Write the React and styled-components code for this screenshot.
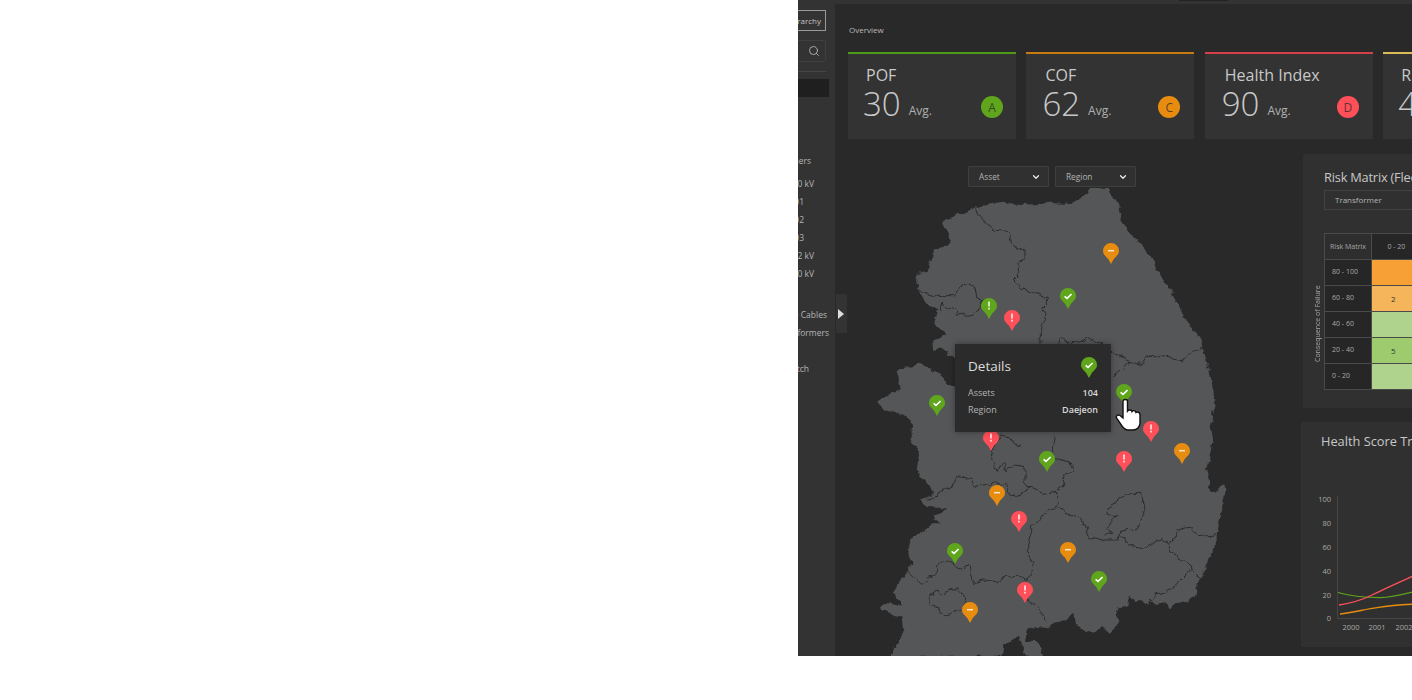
import React from 'react'
import styled, { createGlobalStyle } from 'styled-components'
import { Search, ChevronDown } from 'lucide-react'

const GlobalStyle = createGlobalStyle`
  html, body {
    margin: 0;
    height: 100%;
    overflow: hidden;
    background: #fff;
    font-family: "Open Sans", "Liberation Sans", sans-serif;
  }
`

const Page = styled.div`
  padding-left: 798px;
  width: 614px;
`
const Panel = styled.div`
  display: flex;
  height: 656px;
  width: 614px;
  overflow: hidden;
  background: #292929;
`

/* sidebar is mostly slid off to the left, only the right edge shows */
const Sidebar = styled.aside`
  width: 37px;
  flex-shrink: 0;
  display: flex;
  justify-content: flex-end;
  overflow: hidden;
  background: #333;
`
const SideInner = styled.div`
  width: 200px;
  flex-shrink: 0;
  padding-top: 10px;
  color: #b5b5b5;
  font-size: 8px;
`
const HierarchyBtn = styled.div`
  box-sizing: border-box;
  width: 191px;
  height: 21px;
  border: 1px solid #9a9a9a;
  display: flex;
  align-items: center;
  justify-content: flex-end;
  padding-right: 4px;
  font-size: 8px;
  color: #c4c4c4;
`
const SearchBox = styled.div`
  box-sizing: border-box;
  width: 191px;
  height: 22px;
  margin-top: 9px;
  border: 1px solid #3f3f3f;
  border-radius: 2px;
  display: flex;
  align-items: center;
  justify-content: flex-end;
  padding-right: 5px;
  color: #c8c8c8;
`
const Divider = styled.div`
  width: 191px;
  height: 1px;
  margin-top: 9px;
  background: #454545;
`
const ActiveBar = styled.div`
  width: 194px;
  height: 18px;
  margin-top: 7px;
  background: #1f1f1f;
`
const TreeRow = styled.div`
  height: 18px;
  line-height: 18px;
  text-align: right;
  white-space: nowrap;
  font-size: 8.5px;
  padding-right: ${p => p.$right}px;
  margin-top: ${p => p.$top || 0}px;
`

const Main = styled.main`
  position: relative;
  flex: 1;
  min-width: 0;
  overflow: hidden;
`
const TopStrip = styled.div`
  height: 4px;
  background: #333;
`
const StripTab = styled.div`
  width: 49px;
  height: 1px;
  margin-left: 344px;
  background: #222;
`
const Collapse = styled.div`
  position: absolute;
  left: 1px;
  top: 294px;
  width: 11px;
  height: 39px;
  background: #333;
  display: flex;
  align-items: center;
  padding-left: 2px;
  box-sizing: border-box;
  &::after {
    content: '';
    border-left: 6px solid #ddd;
    border-top: 5px solid transparent;
    border-bottom: 5px solid transparent;
  }
`
const Heading = styled.div`
  margin: 19px 0 0 14px;
  height: 14px;
  line-height: 14px;
  font-size: 8px;
  color: #b9b9b9;
`
const Cards = styled.div`
  display: flex;
  gap: 10.4px;
  margin: 15px 0 0 13px;
`
const Card = styled.div`
  position: relative;
  box-sizing: border-box;
  width: 168px;
  height: 87px;
  flex-shrink: 0;
  padding: 11px 0 0 ${p => p.$inset}px;
  background: #333;
  border-top: 2px solid ${p => p.$color};
`
const CardTitle = styled.div`
  font-size: 16px;
  line-height: 20px;
  color: #c8c8c8;
  padding-left: 3px;
`
const CardValue = styled.div`
  display: flex;
  align-items: baseline;
  gap: 8px;
  margin-top: -1px;
  color: #c8c8c8;
`
const Num = styled.span`
  font-size: 33px;
  line-height: 40px;
  font-weight: 300;
`
const Avg = styled.span`
  position: relative;
  top: -1px;
  font-size: 12px;
  color: #b0b0b0;
`
const Badge = styled.div`
  position: absolute;
  right: ${p => p.$right}px;
  bottom: 21px;
  width: 22px;
  height: 22px;
  border-radius: 50%;
  background: ${p => p.$color};
  color: rgba(40, 40, 40, 0.75);
  font-size: 12px;
  display: flex;
  align-items: center;
  justify-content: center;
`

const Content = styled.div`
  display: flex;
  margin: 15px 0 0 13px;
`
const MapColumn = styled.div`
  width: 453px;
  flex-shrink: 0;
`
const Filters = styled.div`
  display: flex;
  gap: 6px;
  margin: 12px 0 1px 120px;
`
const Filter = styled.div`
  box-sizing: border-box;
  width: 81px;
  height: 21px;
  padding: 0 7px 0 10px;
  display: flex;
  align-items: center;
  justify-content: space-between;
  background: #303030;
  border: 1px solid #3f3f3f;
  border-radius: 1px;
  font-size: 8.3px;
  color: #b4b4b4;
  svg { color: #eee; }
`
const MapCanvas = styled.div`
  position: relative;
  width: 453px;
  height: 468px;
  svg.land { display: block; }
`
const PinSpot = styled.div`
  position: absolute;
  left: ${p => p.$x - 848 - 8}px;
  top: ${p => p.$y - 188 - 8}px;
  width: 16px;
  height: 21px;
`
const HandSpot = styled.div`
  position: absolute;
  left: 267px;
  top: 210px;
  width: 26px;
  height: 33px;
`
const Tooltip = styled.div`
  position: absolute;
  left: 107px;
  top: 156px;
  box-sizing: border-box;
  width: 156px;
  height: 88px;
  padding: 12px 13px;
  background: #2b2b2b;
  box-shadow: 0 0 6px rgba(0, 0, 0, 0.35);
`
const TipHead = styled.div`
  height: 20px;
  line-height: 20px;
  font-size: 13.5px;
  color: #dcdcdc;
  margin-bottom: 8px;
`
const TipRow = styled.div`
  display: flex;
  justify-content: space-between;
  height: 17px;
  line-height: 17px;
  font-size: 9px;
  color: #b4b4b4;
  b { font-weight: 600; color: #d8d8d8; }
`
const TipPin = styled.div`
  position: absolute;
  right: 14px;
  top: 13px;
  width: 16px;
  height: 21px;
`

const RightColumn = styled.div`
  flex-shrink: 0;
  display: flex;
  flex-direction: column;
  gap: 14px;
`
const Box = styled.section`
  width: 400px;
  height: ${p => p.$h}px;
  margin-left: ${p => p.$left}px;
  background: #303030;
  box-sizing: border-box;
  padding-top: ${p => p.$top}px;
`
const BoxTitle = styled.div`
  height: 18px;
  line-height: 18px;
  font-size: 12.8px;
  letter-spacing: ${p => p.$track || 0}px;
  color: #c8c8c8;
  white-space: nowrap;
  margin-left: ${p => p.$left}px;
`
const TypeSelect = styled.div`
  box-sizing: border-box;
  width: 200px;
  height: 20px;
  line-height: 18px;
  margin: 4px 0 23px 21px;
  padding-left: 10px;
  border: 1px solid #414141;
  font-size: 8px;
  color: #b4b4b4;
`
const MatrixWrap = styled.div`
  display: flex;
  padding-left: 9px;
`
const AxisLabel = styled.div`
  width: 12px;
  height: 129px;
  margin-top: 26px;
  writing-mode: vertical-rl;
  transform: rotate(180deg);
  text-align: center;
  font-size: 7px;
  line-height: 12px;
  color: #a8a8a8;
  white-space: nowrap;
`
const Matrix = styled.table`
  border-collapse: collapse;
  table-layout: fixed;
  width: 297px;
  font-size: 7px;
  color: #a8a8a8;
  td, th {
    box-sizing: border-box;
    height: 26px;
    padding: 0;
    font-weight: 400;
    border: 1px solid #4a4a4a;
    text-align: center;
  }
  th { background: #262626; }
`
const Corner = styled.th`
  width: 47px;
  && { background: #2e2e2e; }
`
const RangeCell = styled.td`
  background: #262626;
  && {
    text-align: left;
    padding: 0 0 3px 7px;
  }
`
const HeatCell = styled.td`
  background: ${p => p.$bg};
  color: #333;
  && { padding-right: ${p => p.$pad || 0}px; }
  font-size: 8px;
`

const pinColors = { green: '#5fa61c', orange: '#e88c10', red: '#ff4f58' }

const Pin = ({ color, mark }) => (
  <svg width="16" height="21" viewBox="0 0 16 21">
    <path
      d="M8 0A8 8 0 0 1 16 8C16 12 12 14 10.5 16.5L8 21L5.5 16.5C4 14 0 12 0 8A8 8 0 0 1 8 0Z"
      fill={pinColors[color]}
    />
    {mark === 'check' && <path d="M4.6 8.4L7 10.4L11.6 6" fill="none" stroke="#fff" strokeWidth="1.6" />}
    {mark === 'alert' && <path d="M8 3.4V8.4M8 9.8V11.4" fill="none" stroke="#fff" strokeWidth="1.4" />}
    {mark === 'minus' && <path d="M5 7.7H11" fill="none" stroke="#f6e6cc" strokeWidth="1.5" />}
  </svg>
)

const pins = [
  { x: 1111, y: 251, color: 'orange', mark: 'minus' },
  { x: 989, y: 306, color: 'green', mark: 'alert' },
  { x: 1012, y: 318, color: 'red', mark: 'alert' },
  { x: 1068, y: 296, color: 'green', mark: 'check' },
  { x: 937, y: 403, color: 'green', mark: 'check' },
  { x: 991, y: 438, color: 'red', mark: 'alert' },
  { x: 1151, y: 429, color: 'red', mark: 'alert' },
  { x: 1182, y: 451, color: 'orange', mark: 'minus' },
  { x: 1124, y: 459, color: 'red', mark: 'alert' },
  { x: 1047, y: 459, color: 'green', mark: 'check' },
  { x: 997, y: 493, color: 'orange', mark: 'minus' },
  { x: 1019, y: 519, color: 'red', mark: 'alert' },
  { x: 955, y: 551, color: 'green', mark: 'check' },
  { x: 1068, y: 550, color: 'orange', mark: 'minus' },
  { x: 1099, y: 579, color: 'green', mark: 'check' },
  { x: 1025, y: 590, color: 'red', mark: 'alert' },
  { x: 970, y: 610, color: 'orange', mark: 'minus' },
  { x: 1124, y: 392, color: 'green', mark: 'check' },
]

const LAND = `M660 25L680 18L715 22L722 45L735 60L745 80L755 115L770 150L790 172L815 195L832 222L850 250L870 280L890 310L905 335
L920 362L935 395L950 425L975 455L990 472L998 505L1008 540L1018 570L1030 630L1033 675L1028 720L1022 745L1030 780L1018 830L1005 870
L1018 905L1010 925L1035 938L1065 910L1073 930L1060 960L1052 1010L1040 1065L1040 1105L1012 1128L1006 1150L1000 1180L985 1200L975 1250
L950 1262L935 1265L915 1275L900 1290L880 1270L860 1275L840 1262L835 1278L810 1262L795 1268L780 1245L775 1280L745 1285L735 1292L745 1320
L725 1360L695 1345L660 1360L640 1345L615 1335L610 1295L590 1320L560 1330L530 1345L500 1340L470 1350L465 1382L505 1388L520 1430
L470 1430L450 1370L438 1380L400 1395L395 1430L60 1430L80 1400L100 1360L95 1310L60 1300L30 1290L55 1270L100 1280L70 1240L110 1180
L125 1150L115 1120L125 1080L190 1030L215 1030L190 1010L235 982L170 985L150 960L195 935L165 900L140 870L150 810L125 780L125 720
L90 705L45 690L20 665L50 650L92 625L80 572L125 562L150 548L215 585L232 618L300 620L300 540L255 530L215 505L190 510L185 478L232 465
L190 430L205 390L165 368L145 330L140 285L170 275L185 232L192 212L215 205L245 185L235 160L210 130L240 110L290 95L320 80L400 68L450 72
L520 68L600 72L640 50Z`

const BORDERS = [
  'M320 85L330 110L350 130L370 150L415 155L425 190L465 210L465 240L445 250L445 290L435 300L455 325L490 340L535 350L535 365L515 385L525 400L515 450L512 490',
  'M145 330L165 340L210 350L255 350L265 325L290 310L315 320L320 350L340 360L330 385L310 400L265 405L250 385L230 380L215 365L210 390',
  'M565 490L575 475L600 490L620 490L650 475L690 490L725 520L780 545L815 550L830 530L880 530L940 540L965 515L995 505',
  'M725 590L750 570L780 545',
  'M555 770L550 810L555 835L600 845L605 870L585 885L580 915L555 935L520 940L480 925L465 905L465 860L435 855L410 875L400 845L385 875L362 840L370 800L390 765L420 770L440 795L455 790',
  'M480 925L440 950L420 945L410 915L370 910L340 915L310 920L300 895L260 890L245 920L205 945L170 955',
  'M555 935L565 970L555 980L520 1005L490 1035L480 1070L465 1115L490 1150L485 1185L470 1200L440 1185L410 1190L380 1205L340 1200L310 1210L300 1155L275 1170L240 1145L210 1150L200 1180L155 1210L130 1190L105 1165',
  'M555 980L600 1005L640 1020L655 1070L700 1080L745 1080L755 1050L780 1045L800 1050L825 985L815 940L780 940L750 960L715 980L710 1005L740 1010L710 1040L725 1060L700 1065',
  'M755 1065L775 1095L830 1105L870 1075L900 1095L925 1050L960 1045L985 1070L1035 1065',
  'M900 1095L895 1115L965 1155L965 1170L990 1190M965 1170L900 1230L860 1245L840 1260',
  'M470 1250L525 1310L530 1325',
  'M180 1245L210 1225L215 1240L265 1225L290 1260L280 1290L215 1305L210 1285L180 1275Z',
]

const riskRows = [
  { range: '80 - 100', bg: '#f6a035' },
  { range: '60 - 80', bg: '#f5b55a', value: 2 },
  { range: '40 - 60', bg: '#afd38c' },
  { range: '20 - 40', bg: '#9dcb6d', value: 5 },
  { range: '0 - 20', bg: '#afd38c' },
]

const App = () => (
  <Page>
    <GlobalStyle />
    <Panel>
      <Sidebar>
        <SideInner>
          <HierarchyBtn>Hierarchy</HierarchyBtn>
          <SearchBox><Search size={12} strokeWidth={1.5} /></SearchBox>
          <Divider />
          <ActiveBar />
          <TreeRow $right={24} $top={55}>Transformers</TreeRow>
          <TreeRow $right={21} $top={5}>500 kV</TreeRow>
          <TreeRow $right={31}>T01</TreeRow>
          <TreeRow $right={31}>T02</TreeRow>
          <TreeRow $right={31}>T03</TreeRow>
          <TreeRow $right={21}>322 kV</TreeRow>
          <TreeRow $right={21}>220 kV</TreeRow>
          <TreeRow $right={8} $top={23}>Submarine Cables</TreeRow>
          <TreeRow $right={6}>Transformers</TreeRow>
          <TreeRow $right={26} $top={18}>Switch</TreeRow>
        </SideInner>
      </Sidebar>
      <Main>
        <TopStrip><StripTab /></TopStrip>
        <Collapse />
        <Heading>Overview</Heading>
        <Cards>
          <Card $color="#4f9a16" $inset={15}>
            <CardTitle>POF</CardTitle>
            <CardValue><Num>30</Num><Avg>Avg.</Avg></CardValue>
            <Badge $color={pinColors.green} $right={13}>A</Badge>
          </Card>
          <Card $color="#c87a12" $inset={16}>
            <CardTitle>COF</CardTitle>
            <CardValue><Num>62</Num><Avg>Avg.</Avg></CardValue>
            <Badge $color={pinColors.orange} $right={14}>C</Badge>
          </Card>
          <Card $color="#d6404a" $inset={17}>
            <CardTitle>Health Index</CardTitle>
            <CardValue><Num>90</Num><Avg>Avg.</Avg></CardValue>
            <Badge $color={pinColors.red} $right={14}>D</Badge>
          </Card>
          <Card $color="#d9bc55" $inset={15}>
            <CardTitle>Risk</CardTitle>
            <CardValue><Num>42</Num><Avg>Avg.</Avg></CardValue>
          </Card>
        </Cards>
        <Content>
          <MapColumn>
            <Filters>
              <Filter>Asset <ChevronDown size={10} strokeWidth={3} /></Filter>
              <Filter>Region <ChevronDown size={10} strokeWidth={3} /></Filter>
            </Filters>
            <MapCanvas>
              <svg className="land" width="453" height="468" viewBox="-66 24 1359 1404">
                <defs>
                  <filter id="rough" x="-5%" y="-5%" width="110%" height="110%">
                    <feTurbulence type="fractalNoise" baseFrequency="0.035" numOctaves="3" seed="4" />
                    <feDisplacementMap in="SourceGraphic" scale="22" xChannelSelector="R" yChannelSelector="G" />
                  </filter>
                </defs>
                <g filter="url(#rough)">
                  <path d={LAND} fill="#555658" />
                  <path d="M30 1285L55 1270L62 1285L40 1298Z" fill="#555658" />
                  {BORDERS.map((d, i) => (
                    <path key={i} d={d} fill="none" stroke="#2c2c2c" strokeWidth="3" />
                  ))}
                </g>
              </svg>
              {pins.map((p, i) => (
                <PinSpot key={i} $x={p.x} $y={p.y}><Pin color={p.color} mark={p.mark} /></PinSpot>
              ))}
              <Tooltip>
                <TipHead>Details</TipHead>
                <TipPin><Pin color="green" mark="check" /></TipPin>
                <TipRow><span>Assets</span><b>104</b></TipRow>
                <TipRow><span>Region</span><b>Daejeon</b></TipRow>
              </Tooltip>
              <HandSpot>
                <svg width="26" height="33" viewBox="0 0 26 33">
                  <path
                    d="M8 3C8 1 12.5 1 12.5 3L12.5 13C13.5 11.5 16.5 11.5 17 13.5C18 12 20.5 12.5 21 14.5C22 13.5 25 14 25 17L25 25C25 29 22 32 18 32L13 32C10 32 8.5 30 7 28L1.5 20C.5 18 3 16 5 17.5L8 20Z"
                    fill="#fff"
                    stroke="#111"
                    strokeWidth="1.4"
                  />
                </svg>
              </HandSpot>
            </MapCanvas>
          </MapColumn>
          <RightColumn>
            <Box $h={254} $left={2} $top={14}>
              <BoxTitle $left={21} $track={-0.2}>Risk Matrix (Fleet)</BoxTitle>
              <TypeSelect>Transformer</TypeSelect>
              <MatrixWrap>
                <AxisLabel>Consequence of Failure</AxisLabel>
                <Matrix>
                  <thead>
                    <tr>
                      <Corner>Risk Matrix</Corner>
                      <th>0 - 20</th>
                      <th>20 - 40</th>
                      <th>40 - 60</th>
                      <th>60 - 80</th>
                      <th>80 - 100</th>
                    </tr>
                  </thead>
                  <tbody>
                    {riskRows.map(r => (
                      <tr key={r.range}>
                        <RangeCell>{r.range}</RangeCell>
                        <HeatCell $bg={r.bg} $pad={6}>{r.value}</HeatCell>
                        <HeatCell $bg={r.bg} />
                        <HeatCell $bg={r.bg} />
                        <HeatCell $bg={r.bg} />
                        <HeatCell $bg={r.bg} />
                      </tr>
                    ))}
                  </tbody>
                </Matrix>
              </MatrixWrap>
            </Box>
            <Box $h={225} $left={0} $top={10}>
              <BoxTitle $left={20}>Health Score Trend</BoxTitle>
              <svg
                width="400"
                height="150"
                viewBox="1301 490 400 150"
                style={{ display: 'block', marginTop: 40 }}
              >
                <path d="M1337.5 496V618.5H1420" fill="none" stroke="#454545" />
                {[[100, 502], [80, 526], [60, 550], [40, 574], [20, 598], [0, 621]].map(([n, y]) => (
                  <text key={n} x="1331" y={y} textAnchor="end" fontSize="7.5" fill="#a8a8a8">{n}</text>
                ))}
                {[[2000, 1351], [2001, 1377], [2002, 1404]].map(([n, x]) => (
                  <text key={n} x={x} y="630" textAnchor="middle" fontSize="7.5" fill="#a8a8a8">{n}</text>
                ))}
                <path d="M1338 592.5C1350 596 1362 597.5 1380 597.7C1392 597.5 1402 595 1420 590" fill="none" stroke="#5fa61c" strokeWidth="1.3" />
                <path d="M1339 605C1352 603 1362 600 1372 595C1386 588 1400 582 1420 573" fill="none" stroke="#ff4f58" strokeWidth="1.3" />
                <path d="M1340 614C1352 612.5 1365 609.5 1377 607.7C1390 605.5 1400 604.5 1420 604" fill="none" stroke="#e88c10" strokeWidth="1.3" />
              </svg>
            </Box>
          </RightColumn>
        </Content>
      </Main>
    </Panel>
  </Page>
)

export default App
